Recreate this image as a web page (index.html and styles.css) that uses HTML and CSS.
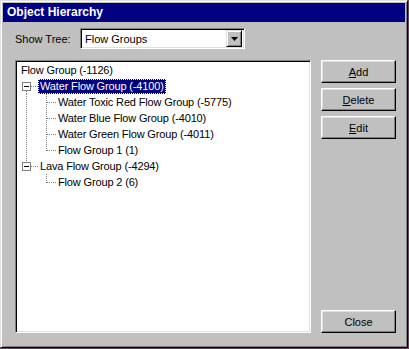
FILE: index.html
```html
<!DOCTYPE html>
<html lang="en">
<head>
    <meta charset="UTF-8">
    <title>Object Hierarchy</title>
    <link rel="stylesheet" href="styles.css">
</head>
<body>
    <div class="window">
        <div class="titlebar">Object Hierarchy</div>
        <div class="content">
            <div class="show-row">
                <label class="show-label">Show Tree:</label>
                <div class="combo">
                    <span class="combo-text">Flow Groups</span>
                    <span class="combo-btn">
                        <svg width="7" height="4" viewBox="0 0 7 4"><path d="M0 0h7l-3.5 4z" fill="#000"/></svg>
                    </span>
                </div>
            </div>
            <div class="main">
                <div class="tree">
                    <div class="row">
                        <span class="label root">Flow Group (-1126)</span>
                    </div>
                    <div class="row">
                        <svg class="guide" width="20" height="16" shape-rendering="crispEdges">
                            <line x1="8.5" y1="13" x2="8.5" y2="16" class="dot"/>
                            <line x1="13" y1="8.5" x2="20" y2="8.5" class="dot"/>
                            <rect x="4.5" y="4.5" width="8" height="8" fill="#fff" stroke="#808080"/>
                            <line x1="6" y1="8.5" x2="11" y2="8.5" stroke="#000"/>
                        </svg>
                        <span class="label selected">Water Flow Group (-4100)</span>
                    </div>
                    <div class="row">
                        <svg class="guide" width="38" height="16" shape-rendering="crispEdges">
                            <line x1="8.5" y1="0" x2="8.5" y2="16" class="dot"/>
                            <line x1="28.5" y1="0" x2="28.5" y2="16" class="dot"/>
                            <line x1="29" y1="8.5" x2="38" y2="8.5" class="dot"/>
                        </svg>
                        <span class="label">Water Toxic Red Flow Group (-5775)</span>
                    </div>
                    <div class="row">
                        <svg class="guide" width="38" height="16" shape-rendering="crispEdges">
                            <line x1="8.5" y1="0" x2="8.5" y2="16" class="dot"/>
                            <line x1="28.5" y1="0" x2="28.5" y2="16" class="dot"/>
                            <line x1="29" y1="8.5" x2="38" y2="8.5" class="dot"/>
                        </svg>
                        <span class="label">Water Blue Flow Group (-4010)</span>
                    </div>
                    <div class="row">
                        <svg class="guide" width="38" height="16" shape-rendering="crispEdges">
                            <line x1="8.5" y1="0" x2="8.5" y2="16" class="dot"/>
                            <line x1="28.5" y1="0" x2="28.5" y2="16" class="dot"/>
                            <line x1="29" y1="8.5" x2="38" y2="8.5" class="dot"/>
                        </svg>
                        <span class="label">Water Green Flow Group (-4011)</span>
                    </div>
                    <div class="row">
                        <svg class="guide" width="38" height="16" shape-rendering="crispEdges">
                            <line x1="8.5" y1="0" x2="8.5" y2="16" class="dot"/>
                            <line x1="28.5" y1="0" x2="28.5" y2="9" class="dot"/>
                            <line x1="29" y1="8.5" x2="38" y2="8.5" class="dot"/>
                        </svg>
                        <span class="label">Flow Group 1 (1)</span>
                    </div>
                    <div class="row">
                        <svg class="guide" width="20" height="16" shape-rendering="crispEdges">
                            <line x1="8.5" y1="0" x2="8.5" y2="4" class="dot"/>
                            <line x1="13" y1="8.5" x2="20" y2="8.5" class="dot"/>
                            <rect x="4.5" y="4.5" width="8" height="8" fill="#fff" stroke="#808080"/>
                            <line x1="6" y1="8.5" x2="11" y2="8.5" stroke="#000"/>
                        </svg>
                        <span class="label">Lava Flow Group (-4294)</span>
                    </div>
                    <div class="row">
                        <svg class="guide" width="38" height="16" shape-rendering="crispEdges">
                            <line x1="28.5" y1="0" x2="28.5" y2="9" class="dot"/>
                            <line x1="29" y1="8.5" x2="38" y2="8.5" class="dot"/>
                        </svg>
                        <span class="label">Flow Group 2 (6)</span>
                    </div>
                </div>
                <div class="buttons">
                    <button class="btn"><u>A</u>dd</button>
                    <button class="btn"><u>D</u>elete</button>
                    <button class="btn"><u>E</u>dit</button>
                    <div class="spacer"></div>
                    <button class="btn">Close</button>
                </div>
            </div>
        </div>
    </div>
</body>
</html>
```

FILE: styles.css
```css
body {
    margin: 0;
    background: #6b3f5c;
    font-family: "Liberation Sans", Arial, sans-serif;
    font-size: 11px;
    color: #000;
}
.window {
    width: 408px;
    height: 348px;
    box-sizing: border-box;
    background: #c0c0c0;
    border-top: 1px solid #dfdfdf;
    border-left: 1px solid #dfdfdf;
    border-right: 1px solid #000;
    border-bottom: 1px solid #000;
    box-shadow: inset 1px 1px 0 #fff, inset -1px -1px 0 #808080;
    padding: 2px;
    display: flex;
    flex-direction: column;
}
.titlebar {
    height: 19px;
    background: #000080;
    color: #fff;
    font-weight: bold;
    font-size: 12px;
    line-height: 19px;
    padding-left: 4px;
    flex-shrink: 0;
}
.content {
    flex: 1;
    display: flex;
    flex-direction: column;
    padding: 6px 8px 12px 12px;
    min-height: 0;
}
.show-row {
    display: flex;
    align-items: center;
    height: 21px;
}
.show-label {
    width: 65px;
    padding-top: 1px;
}
.combo {
    width: 165px;
    height: 21px;
    box-sizing: border-box;
    background: #fff;
    border-top: 1px solid #808080;
    border-left: 1px solid #808080;
    border-right: 1px solid #fff;
    border-bottom: 1px solid #fff;
    box-shadow: inset 1px 1px 0 #000, inset -1px -1px 0 #dfdfdf;
    padding: 2px;
    display: flex;
    align-items: center;
}
.combo-text {
    flex: 1;
    padding-left: 2px;
}
.combo-btn {
    width: 16px;
    height: 17px;
    box-sizing: border-box;
    background: #c0c0c0;
    border-top: 1px solid #dfdfdf;
    border-left: 1px solid #dfdfdf;
    border-right: 1px solid #000;
    border-bottom: 1px solid #000;
    box-shadow: inset 1px 1px 0 #fff, inset -1px -1px 0 #808080;
    display: flex;
    align-items: center;
    justify-content: center;
}
.main {
    flex: 1;
    display: flex;
    gap: 10px;
    margin-top: 11px;
    min-height: 0;
}
.tree {
    width: 296px;
    box-sizing: border-box;
    background: #fff;
    border-top: 1px solid #808080;
    border-left: 1px solid #808080;
    border-right: 1px solid #fff;
    border-bottom: 1px solid #fff;
    box-shadow: inset 1px 1px 0 #000, inset -1px -1px 0 #dfdfdf;
    padding: 1px 2px 2px;
    letter-spacing: -0.15px;
}
.row {
    display: flex;
    height: 16px;
    align-items: center;
}
.guide {
    flex-shrink: 0;
    display: block;
}
.dot {
    stroke: #808080;
    stroke-dasharray: 1 1;
}
.label {
    height: 15px;
    line-height: 15px;
    padding: 0 2px;
    white-space: nowrap;
}
.root {
    margin-left: 1px;
}
.selected {
    background: #000080;
    color: #fff;
    outline: 1px dotted #ffff80;
    outline-offset: -1px;
}
.buttons {
    width: 75px;
    display: flex;
    flex-direction: column;
    gap: 5px;
}
.spacer {
    flex: 1;
}
.btn {
    height: 23px;
    box-sizing: border-box;
    font-family: "Liberation Sans", Arial, sans-serif;
    font-size: 11px;
    color: #000;
    background: #c0c0c0;
    border-top: 1px solid #fff;
    border-left: 1px solid #fff;
    border-right: 1px solid #000;
    border-bottom: 1px solid #000;
    box-shadow: inset -1px -1px 0 #808080, inset 1px 1px 0 #dfdfdf;
    padding: 0;
}
```
